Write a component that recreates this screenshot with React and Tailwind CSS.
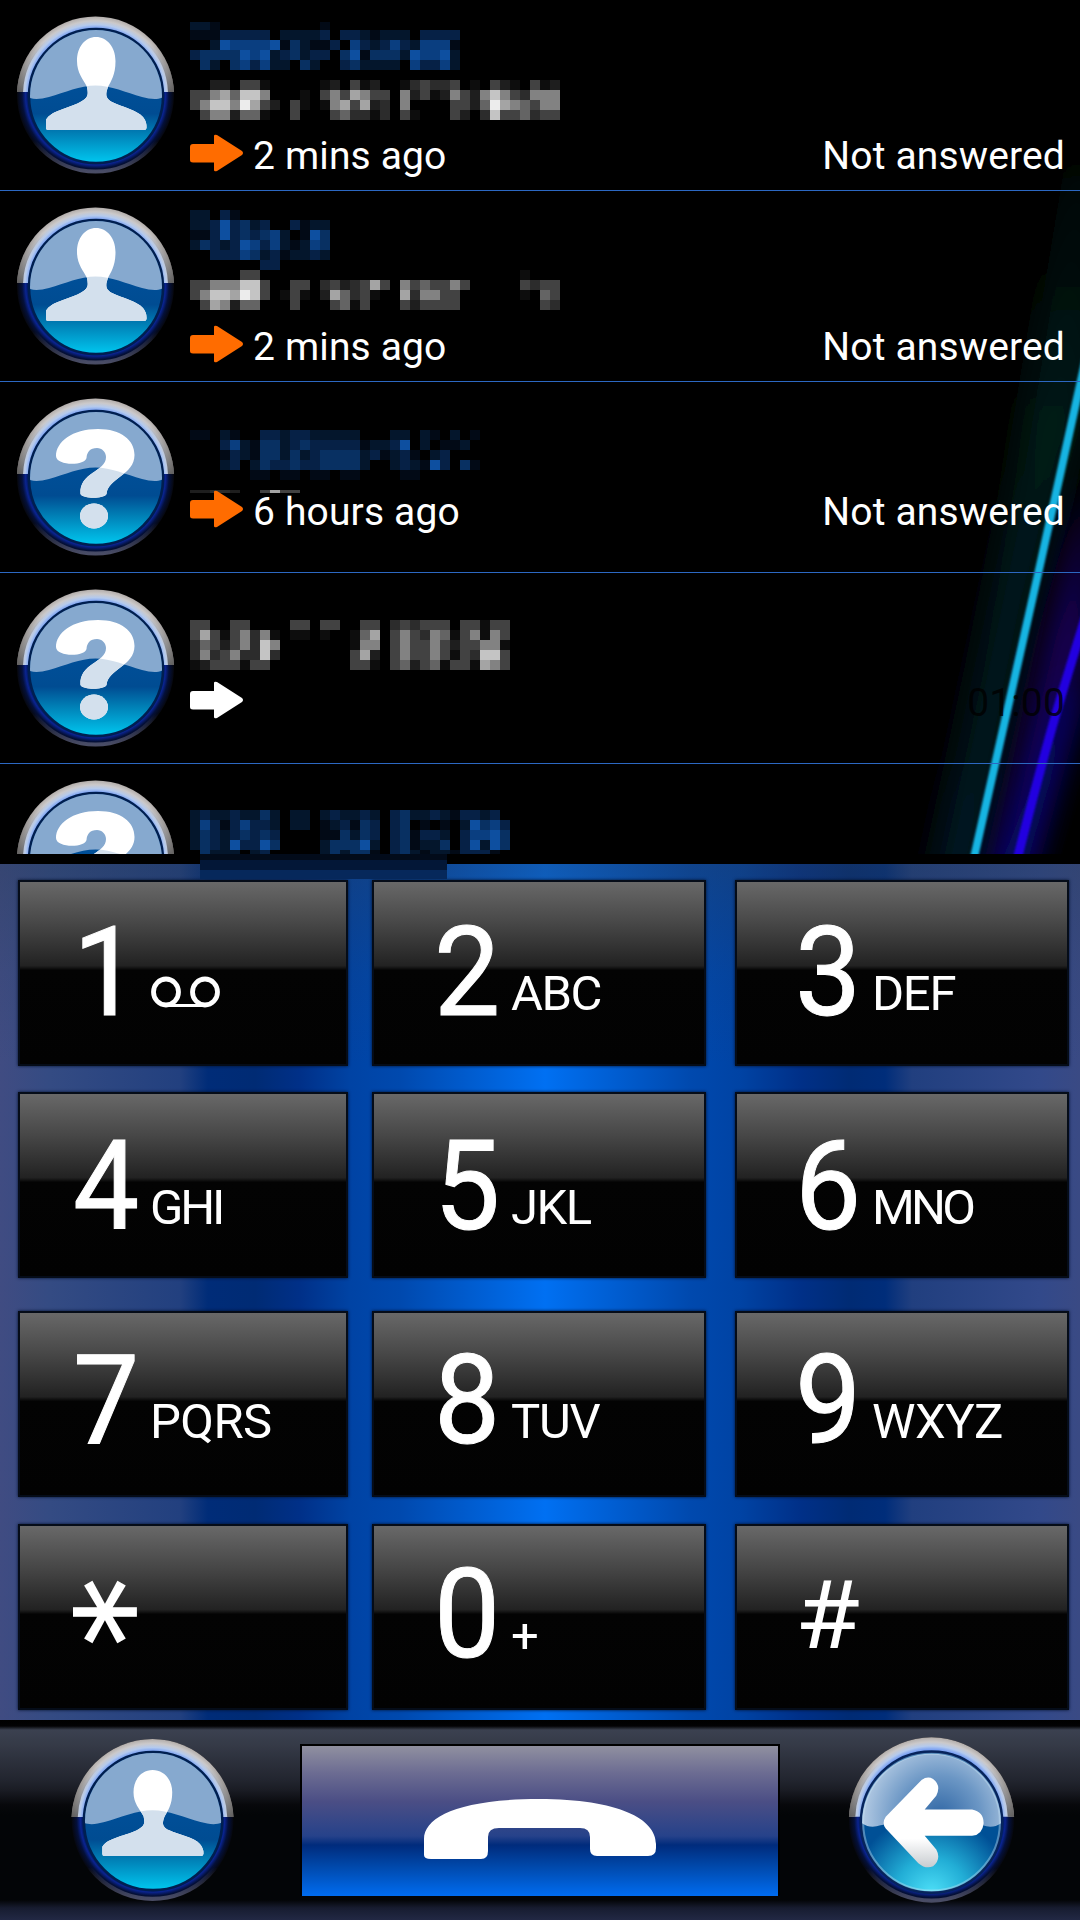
const BLUES = ['', '#020a16', '#04162c', '#062146', '#083062', '#0a3e80', '#0d4fa0']
const GRAYS = ['', '#0d0d0d', '#1e1e1e', '#2c2c2c', '#424242', '#646464', '#828282', '#a4a4a4', '#c4c4c4', '#ececec']

const calls = [
  {
    icon: 'person',
    blocks: [
      { tone: BLUES, className: 'mt-[22px]', first: 8, rows: [
        '221000000000010000000000000',
        '111333330222230332122203333',
        '002655556142113053235325551',
        '344446562342330461444265562',
        '042045352204200342222053352',
      ] },
      { tone: GRAYS, className: 'mt-[10px]', rows: [
        '0022044100000120412001343340104210412',
        '4467588600010464764406241264268643666',
        '4688697420410167472306000044259765466',
        '0466255100400045331304100042038445344',
      ] },
    ],
    head: 'h-[133px]',
    arrow: '#ff6c00',
    time: '2 mins ago',
    status: 'Not answered',
  },
  {
    icon: 'person',
    blocks: [
      { tone: BLUES, className: 'mt-[19px]', rows: [
        '22031000000000',
        '22363423003122',
        '11363434520164',
        '24323653521254',
        '00333542312232',
        '00000003300000',
      ] },
      { tone: GRAYS, rows: [
        '0000044000000000000000000000000001000',
        '4466688400440342347406454464000004344',
        '4688798401410275341007366440000001054',
        '0476255000400045140004244440000000043',
      ] },
    ],
    head: 'h-[133px]',
    arrow: '#ff6c00',
    time: '2 mins ago',
    status: 'Not answered',
  },
  {
    icon: 'question',
    blocks: [
      { tone: BLUES, className: 'mt-[48px]', rows: [
        '11021003323322222000220210201',
        '00035214423433333122360201120',
        '00013214424234444231231023000',
        '00023024334334444200232163041',
        '00000011011011011000011000000',
      ] },
      { tone: GRAYS, className: 'mt-[10px]', first: 3, rows: ['22332004744'] },
    ],
    head: 'h-[107px]',
    arrow: '#ff6c00',
    time: '6 hours ago',
    status: 'Not answered',
  },
  {
    icon: 'question',
    blocks: [
      { tone: GRAYS, className: 'mt-[47px]', rows: [
        '44004400004404400440343444044144',
        '47414636101101001570464365146164',
        '35424638600000001660464464244661',
        '36346338300000004720464464143884',
        '12444144000000004410452451441764',
      ] },
    ],
    head: 'h-[107px]',
    arrow: '#ffffff',
    time: '',
    status: '01:00',
    dark: true,
  },
  {
    icon: 'question',
    blocks: [
      { tone: BLUES, className: 'mt-[46px]', rows: [
        '23223224202202322320342232133230',
        '25313533202201231430340101026453',
        '24323434300001142430341332035564',
        '24326336400002444620341224036264',
        '04222023000002424410342122133310',
      ] },
    ],
    head: 'h-[90px]',
  },
]

const keys = [
  { digit: '1', voicemail: true },
  { digit: '2', letters: 'ABC', tracking: 'tracking-[-1.5px]' },
  { digit: '3', letters: 'DEF', tracking: 'tracking-[-1.3px]' },
  { digit: '4', letters: 'GHI', tracking: 'tracking-[-3.2px]' },
  { digit: '5', letters: 'JKL', tracking: 'tracking-[-1.5px]' },
  { digit: '6', letters: 'MNO', tracking: 'tracking-[-3.8px]' },
  { digit: '7', letters: 'PQRS', tracking: 'tracking-[-0.6px]' },
  { digit: '8', letters: 'TUV', tracking: 'tracking-[-1.3px]' },
  { digit: '9', letters: 'WXYZ', tracking: 'tracking-[-0.5px]' },
  { digit: '*' },
  { digit: '0', letters: '+' },
  { digit: '#' },
]

// the key faces are not spaced evenly inside their cells
const rowInset = ['mt-[16px]', 'mt-[14px]', 'mt-[19px]', 'mt-[18px]']
const colInset = ['ml-[18px] w-[330px]', 'ml-[12px] w-[334px]', 'ml-[15px] w-[334px]']
const labelInset = ['pl-[73px]', 'pl-[74px]', 'pl-[75px]']

function Mosaic({ rows, tone, className = '', first = 10 }) {
  const width = rows[0].length * 10
  const height = rows.length * 10 - 10 + first
  return (
    <svg className={`shrink-0 ${className}`} width={width} height={height} viewBox={`0 ${10 - first} ${width} ${height}`} shapeRendering="crispEdges">
      {rows.map((row, y) =>
        row.split('').map((level, x) =>
          level === '0' ? null : <rect key={`${x}-${y}`} x={x * 10} y={y * 10} width="10" height="10" fill={tone[Number(level)]} />
        )
      )}
    </svg>
  )
}

const PERSON = 'M96 37C107 37 115.500 47 115.500 61C115.500 75 111 81 108 87C105.500 94 105 98 112 102C122 107 137 110 143 117Q147 122 146.500 128Q146.500 130 144 130H48Q46 130 46 128V120C51 110 71 108 82 101C89 97 88 93 87 87C83 79 77 73 77 61C77 47 85 37 96 37Z'
const QUESTION = 'M56 74C56 60 72 47 98 47C121 47 134.500 58 134.500 73C134.500 93 108 96 106.500 112C104 117 83 117 80.500 112C79 90 106 90 106 75C106 70 102 66 97 66C90 66 87 70 86.500 76C85 84 56 84 56 74Z'
const WAVE = 'M20 90C28 101 37 100 49 97C65 92.500 80 85.500 95.500 85.500C111 85.500 126 92.500 142 97C154 100 163 101 172 90'

function Glyph({ icon, fill, clip, person }) {
  return (
    <g fill={fill} clipPath={clip}>
      {icon === 'person' ? <path d={PERSON} transform={person} /> : (
        <>
          <path d={QUESTION} />
          <ellipse cx="94" cy="134" rx="14" ry="12.500" />
        </>
      )}
    </g>
  )
}

function Rim() {
  return (
    <>
      <defs>
        <radialGradient id="rimTop" gradientUnits="userSpaceOnUse" cx="95.500" cy="95" r="79">
          <stop offset="0.850" stopColor="#7fa4f2" />
          <stop offset="0.890" stopColor="#b4caee" />
          <stop offset="0.940" stopColor="#cbc9ca" />
          <stop offset="1" stopColor="#b0aaa6" />
        </radialGradient>
        <radialGradient id="rimBottom" gradientUnits="userSpaceOnUse" cx="95.500" cy="95" r="79">
          <stop offset="0.850" stopColor="#00175a" />
          <stop offset="0.885" stopColor="#0a2490" />
          <stop offset="0.930" stopColor="#04103a" />
          <stop offset="1" stopColor="#060609" />
        </radialGradient>
        <linearGradient id="rimShine" x1="0" y1="0" x2="0" y2="1">
          <stop offset="0.800" stopColor="#5a5d78" stopOpacity="0" />
          <stop offset="1" stopColor="#5a5d78" stopOpacity="0.800" />
        </linearGradient>
        <linearGradient id="rimShade" x1="0" y1="0" x2="0" y2="1">
          <stop offset="0.150" stopColor="#555" stopOpacity="0" />
          <stop offset="0.480" stopColor="#444" stopOpacity="0.750" />
        </linearGradient>
        <clipPath id="upper">
          <path d="M0 0H190V92H0Z" />
        </clipPath>
      </defs>
      <circle cx="95.500" cy="95" r="78.500" fill="url(#rimBottom)" />
      <circle cx="95.500" cy="95" r="76.500" fill="none" stroke="url(#rimShine)" strokeWidth="4" />
      <g clipPath="url(#upper)">
        <circle cx="95.500" cy="95" r="78.500" fill="url(#rimTop)" />
        <circle cx="95.500" cy="95" r="75.500" fill="none" stroke="url(#rimShade)" strokeWidth="6" />
      </g>
    </>
  )
}

function Avatar({ icon, person, className = '' }) {
  return (
    <svg className={`shrink-0 ${className}`} viewBox="0 0 190 190">
      <Rim />
      <defs>
        <linearGradient id="ball" gradientUnits="userSpaceOnUse" x1="0" y1="86" x2="0" y2="163">
          <stop offset="0" stopColor="#004f98" />
          <stop offset="0.360" stopColor="#004c92" />
          <stop offset="0.620" stopColor="#0080b6" />
          <stop offset="1" stopColor="#00c8f0" />
        </linearGradient>
        <clipPath id="disc">
          <circle cx="96" cy="96" r="66" />
        </clipPath>
        <clipPath id="below">
          <path d={`${WAVE}V170H20Z`} />
        </clipPath>
      </defs>
      <circle cx="96" cy="96" r="67" fill="url(#ball)" stroke="#001f50" strokeWidth="2.500" />
      <path d={`${WAVE}V20H20Z`} fill="#86a9cf" clipPath="url(#disc)" />
      <Glyph icon={icon} fill="#ffffff" person={person} />
      <Glyph icon={icon} fill="#d3e0ed" clip="url(#below)" person={person} />
    </svg>
  )
}

function BackIcon() {
  return (
    <svg className="h-[200px] w-[200px] shrink-0" viewBox="0 0 190 190">
      <Rim />
      <defs>
        <radialGradient id="backLow" gradientUnits="userSpaceOnUse" cx="95.500" cy="165" r="75">
          <stop offset="0" stopColor="#4ee0f8" />
          <stop offset="0.450" stopColor="#22aed6" />
          <stop offset="1" stopColor="#005096" />
        </radialGradient>
        <radialGradient id="backHigh" gradientUnits="userSpaceOnUse" cx="103" cy="92" r="72">
          <stop offset="0" stopColor="#2f66a4" />
          <stop offset="0.550" stopColor="#6c97c5" />
          <stop offset="1" stopColor="#b0c8e2" />
        </radialGradient>
        <linearGradient id="backArrow" x1="0" y1="0" x2="0" y2="1">
          <stop offset="0.680" stopColor="#fff" />
          <stop offset="1" stopColor="#c8ccd0" />
        </linearGradient>
      </defs>
      <circle cx="95.500" cy="97" r="67" fill="url(#backLow)" stroke="#06245c" strokeWidth="2.500" />
      <path d="M29.500 98A66 66 0 0 1 161.500 98C156 102 150 102 144 100C112 94 79 94 47 100C41 102 35 102 29.500 98Z" fill="url(#backHigh)" />
      <circle cx="95.500" cy="97" r="65" fill="none" stroke="#c8e4f4" strokeOpacity="0.400" strokeWidth="2" />
      <path d="M52 92L83 60Q90 52 97 56Q105 62 100 72L89 85H134Q145 87 145 98Q144 109 134 110H89L100 123Q105 132 97 139Q90 142 83 136L52 103Q48 98 52 92Z" fill="url(#backArrow)" />
    </svg>
  )
}

function CallArrow({ color }) {
  return (
    <svg className="mt-[1px] h-[38px] w-[54px] shrink-0" viewBox="0 0 54 38">
      <path d="M3 10H24V2Q24 0 27 1L52 17Q54 19 52 21L27 37Q24 38 24 36V28.500H3Q0 28.500 0 26V13Q0 10 3 10Z" fill={color} />
    </svg>
  )
}

function CallRow({ call }) {
  return (
    <li className="relative flex h-[191px] w-full shrink-0 border-b border-[#2c68c2]">
      <Avatar icon={call.icon} className="h-[190px] w-[190px]" />
      <div className="flex flex-1 flex-col pr-[15px]">
        <div className={`flex shrink-0 flex-col items-start ${call.head}`}>
          {call.blocks.map((block, i) => <Mosaic key={i} {...block} />)}
        </div>
        {call.arrow && (
          <div className="flex text-[39px] leading-[46px] text-white">
            <CallArrow color={call.arrow} />
            <span className="ml-[9px] tracking-[0.15px]">{call.time}</span>
            <span className={`ml-auto tracking-[0.15px] ${call.dark ? 'text-black/80' : ''}`}>{call.status}</span>
          </div>
        )}
      </div>
    </li>
  )
}

function Beams() {
  return (
    <svg className="absolute top-0 right-0 h-[854px] w-[300px]" viewBox="780 0 300 854">
      <defs>
        <filter id="soft" x="-80%" y="-30%" width="260%" height="160%">
          <feGaussianBlur stdDeviation="15" />
        </filter>
        <filter id="edge" x="-20%" y="-5%" width="140%" height="110%">
          <feGaussianBlur stdDeviation="1.200" />
        </filter>
        <linearGradient id="teal" x1="0" y1="0" x2="0" y2="1">
          <stop offset="0" stopColor="#021a18" stopOpacity="0" />
          <stop offset="0.400" stopColor="#021a18" />
          <stop offset="1" stopColor="#021822" />
        </linearGradient>
      </defs>
      <path d="M1075 100L1010 500L925 900H975L1035 600L1095 370V100Z" fill="url(#teal)" filter="url(#soft)" />
      <path d="M1090 480L1045 640L985 900H1020L1090 640Z" fill="#130054" filter="url(#soft)" />
      <path d="M1060 700L990 890H1020L1085 680Z" fill="#00086c" filter="url(#soft)" />
      <path d="M1090 340Q1064 458 1038.500 572T973 862" fill="none" stroke="#19b4e2" strokeWidth="8" filter="url(#edge)" />
      <path d="M1094 590Q1072 660 1058 707T1016 864" fill="none" stroke="#2404e0" strokeWidth="9" filter="url(#edge)" />
    </svg>
  )
}

function Voicemail() {
  return (
    <svg className="ml-[5px] mt-[112px] h-[32px] w-[72px]" viewBox="0 0 72 32" fill="none" stroke="#fff">
      <ellipse cx="16" cy="16" rx="12.500" ry="13" strokeWidth="4.800" />
      <ellipse cx="55" cy="16" rx="12.500" ry="13" strokeWidth="4.800" />
      <path d="M16 29.500H55" strokeWidth="3" />
    </svg>
  )
}

function Digit({ value }) {
  if (value === '*') {
    return <span className="-ml-[25px] mt-[40px] flex h-[132px] w-[68px] rotate-90 items-center justify-center font-['DejaVu_Sans'] text-[136px] leading-none [-webkit-text-stroke:2px_white]">*</span>
  }
  if (value === '#') {
    return <span className="mt-[37px] w-[72px] shrink-0 origin-left scale-x-[1.12] text-[94px] leading-[146px]">#</span>
  }
  return <span className="mt-[36px] w-[72px] shrink-0 origin-left scale-x-[0.95] text-[124px] leading-[146px] [-webkit-text-stroke:1px_white]">{value}</span>
}

function Key({ item, row, col }) {
  return (
    <button className="grid h-[214px] w-[360px] text-left text-white">
      <span className={`col-start-1 row-start-1 h-[186px] border-2 border-[#050c18] bg-[linear-gradient(180deg,#686868_0%,#484848_22%,#222222_46%,#030303_48.5%,#020202_100%)] shadow-[0_0_3px_#03102a] ${rowInset[row]} ${colInset[col]}`} />
      <span className={`col-start-1 row-start-1 flex items-start ${labelInset[col]}`}>
        <Digit value={item.digit} />
        {item.voicemail && <Voicemail />}
        {item.letters && (
          <span className={`ml-[5px] mt-[101px] text-[49px] leading-[58px] ${item.tracking || ''}`}>{item.letters}</span>
        )}
      </span>
    </button>
  )
}

function App() {
  return (
    <div className="relative flex h-[1920px] w-[1080px] flex-col overflow-hidden bg-black font-[Roboto,sans-serif]">
      <div className="relative h-[864px] shrink-0">
        <Beams />
        <ul className="relative flex h-[854px] flex-col overflow-hidden">
          {calls.map((call, i) => <CallRow key={i} call={call} />)}
        </ul>
        <div className="absolute top-[854px] left-[200px] z-10 h-[6px] w-[247px] bg-[#020b1a]" />
        <div className="absolute top-[860px] left-[200px] z-10 h-[10px] w-[247px] bg-[#031737]" />
        <div className="absolute top-[870px] left-[200px] z-10 h-[9px] w-[247px] bg-[#06285b]" />
      </div>

      <div className="h-[856px] shrink-0 bg-[linear-gradient(90deg,#404c82_0px,#344b83_50px,#22407f_180px,#002c78_208px,#002b74_255px,#003088_300px,#0043a4_350px,#0049ae_400px,#0070f2_545px,#0049ae_690px,#0043a4_740px,#003088_800px,#002b74_850px,#002d7a_885px,#213f7f_912px,#32498a_1040px,#3a4a84_1080px)]">
        <div className="grid h-full grid-cols-3 bg-[linear-gradient(180deg,rgba(40,60,90,0.4)_0px,rgba(40,60,90,0.12)_110px,transparent_200px)]">
          {keys.map((item, i) => <Key key={item.digit} item={item} row={Math.floor(i / 3)} col={i % 3} />)}
        </div>
      </div>

      <div className="flex h-[200px] shrink-0 items-start bg-[linear-gradient(180deg,#000_0px,#020204_6px,#3b4150_10px,#353a47_25px,#22252f_60px,#1a1c24_70px,#07080b_85px,#030507_95px,#030507_180px,#171c30_188px,#222844_200px)]">
        <Avatar icon="person" person="translate(2 13.500) scale(0.975 0.895)" className="ml-[54px] mt-[2px] h-[196px] w-[196px]" />
        <button className="ml-[50px] mt-[24px] flex h-[152px] w-[480px] shrink-0 border-2 border-b-0 border-black bg-[linear-gradient(180deg,#9090a0_0%,#6c6c92_18%,#4b4e85_37%,#26428a_60%,#002b7c_66%,#0048aa_80%,#006cf0_100%)]">
          <svg className="ml-[121px] mt-[52px] h-[65px] w-[234px]" viewBox="0 0 234 65">
            <path d="M1 41C1 19 36 1 116 1C196 1 233 21 233 46V50Q233 58 225 58H174Q167 58 167 51V39Q167 30 157 30H76Q65 30 65 39V53Q65 61 58 61H8Q1 61 1 57Z" fill="#fff" />
          </svg>
        </button>
        <div className="ml-[51px]">
          <BackIcon />
        </div>
      </div>
    </div>
  )
}

export default App
